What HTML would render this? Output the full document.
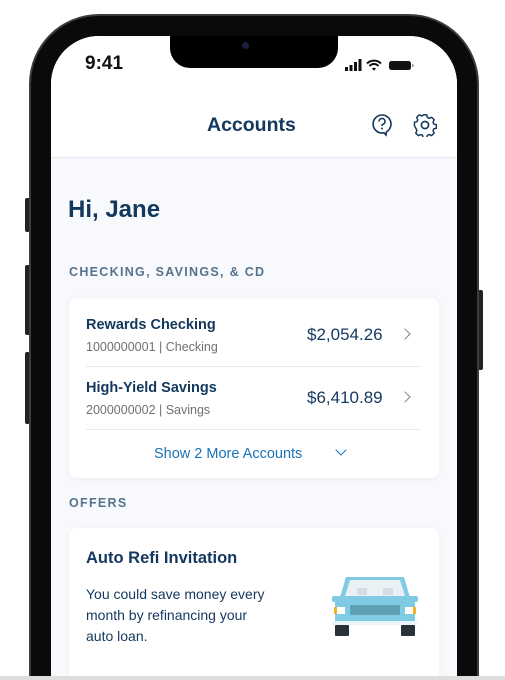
<!DOCTYPE html>
<html style="width:505px;height:680px;overflow:hidden"><head><style>
*{margin:0;padding:0;box-sizing:border-box}
body{width:505px;height:680px;background:#fff;position:relative;overflow:hidden;font-family:"Liberation Sans",sans-serif}
.frame{position:absolute;left:29px;top:14px;width:450px;height:666px;background:#0a0a0a;border-radius:70px 70px 0 0;border:2px solid #3a3d40;border-bottom:0}
.screen{position:absolute;left:51px;top:36px;width:406px;height:644px;background:#f7f9fc;border-radius:48px 48px 0 0;overflow:hidden}
.hdr{position:absolute;left:0;top:0;width:406px;height:122px;background:#fff;border-bottom:1.5px solid #e4ecf3}
.notch{position:absolute;left:119px;top:-2px;width:168px;height:34px;background:#000;border-radius:0 0 20px 20px}
.btn{position:absolute;background:#222;border-radius:2px}
.t{position:absolute;white-space:nowrap;color:#13385d}
.card{position:absolute;background:#fff;border-radius:8px;box-shadow:0 1px 6px rgba(0,0,0,.05)}
.lbl{position:absolute;font-size:12.5px;letter-spacing:1.3px;color:#56738d;font-weight:bold}
.chev{position:absolute;width:8px;height:8px;border-right:1.8px solid #7a8796;border-top:1.8px solid #7a8796;transform:rotate(45deg)}
</style></head><body>
<div class="btn" style="left:25px;top:198px;width:5px;height:34px"></div>
<div class="btn" style="left:25px;top:265px;width:5px;height:70px"></div>
<div class="btn" style="left:25px;top:352px;width:5px;height:72px"></div>
<div class="btn" style="left:478px;top:290px;width:5px;height:80px"></div>
<div class="frame"></div>
<div class="screen">
 <div class="hdr"></div>
 <div class="notch"><div style="position:absolute;left:72px;top:8px;width:7px;height:7px;border-radius:50%;background:#1a2040"></div></div>
 <div class="t" style="left:34px;top:17px;font-size:19px;font-weight:bold;color:#111">9:41</div>
 <svg style="position:absolute;left:294px;top:23px" width="70" height="12" viewBox="0 0 70 12">
  <rect x="0" y="8" width="3" height="4" fill="#111"/><rect x="4.5" y="6" width="3" height="6" fill="#111"/><rect x="9" y="3" width="3" height="9" fill="#111"/><rect x="13.5" y="0" width="3" height="12" fill="#111"/>
  <path d="M22 4.5a10 10 0 0 1 14 0M24.5 7a6 6 0 0 1 9 0" stroke="#111" stroke-width="2" fill="none"/><path d="M27 9.5l2 2.3 2-2.3a3 3 0 0 0-4 0z" fill="#111"/>
  <rect x="44" y="2" width="22" height="9" rx="2.5" fill="#111"/><rect x="67" y="5" width="1.5" height="3" fill="#999"/>
 </svg>
 <div class="t" style="left:156px;top:78px;font-size:19.5px;font-weight:bold">Accounts</div>
 <svg style="position:absolute;left:320px;top:77px" width="22" height="24" viewBox="0 0 22 24"><path d="M11 2a9 9 0 1 0 2 17.8L15 22l.5-3.2A9 9 0 0 0 11 2z" fill="none" stroke="#13385d" stroke-width="1.6"/><path d="M8 8.5a3 3 0 1 1 4 2.8c-.8.4-1 .9-1 1.7" fill="none" stroke="#13385d" stroke-width="1.6"/><circle cx="11" cy="15.5" r="1" fill="#13385d"/></svg>
 <svg style="position:absolute;left:362px;top:77px" width="24" height="24" viewBox="0 0 24 24"><path d="M10 2h4l.6 2.8 2 1 2.6-1.2 2.8 2.8-1.2 2.6.8 2 2.8.6v4l-2.8.6-.8 2 1.2 2.6-2.8 2.8-2.6-1.2-2 .8-.6 2.8h-4l-.6-2.8-2-.8-2.6 1.2-2.8-2.8 1.2-2.6-.8-2L.6 14V10l2.8-.6.8-2L3 4.8 5.8 2l2.6 1.2 2-1z" transform="scale(.92) translate(1 0)" fill="none" stroke="#13385d" stroke-width="1.6" stroke-linejoin="round"/><circle cx="12" cy="12" r="3.6" fill="none" stroke="#13385d" stroke-width="1.6"/></svg>
 <div class="t" style="left:17px;top:160px;font-size:24px;font-weight:bold">Hi, Jane</div>
 <div class="lbl" style="left:18px;top:229px">CHECKING, SAVINGS, &amp; CD</div>
 <div class="card" style="left:18px;top:262px;width:370px;height:180px"></div>
 <div class="t" style="left:35px;top:281px;font-size:14.5px;font-weight:bold">Rewards Checking</div>
 <div class="t" style="left:35px;top:304px;font-size:12.5px;color:#707070">1000000001 | Checking</div>
 <div class="t" style="left:256px;top:289px;font-size:17px">$2,054.26</div>
 <div class="chev" style="left:350px;top:294px"></div>
 <div style="position:absolute;left:35px;top:330px;width:335px;height:1px;background:#e6eaee"></div>
 <div class="t" style="left:35px;top:344px;font-size:14.5px;font-weight:bold">High-Yield Savings</div>
 <div class="t" style="left:35px;top:367px;font-size:12.5px;color:#707070">2000000002 | Savings</div>
 <div class="t" style="left:256px;top:352px;font-size:17px">$6,410.89</div>
 <div class="chev" style="left:350px;top:357px"></div>
 <div style="position:absolute;left:35px;top:393px;width:335px;height:1px;background:#e6eaee"></div>
 <div class="t" style="left:103px;top:410px;font-size:14.5px;color:#1a73b8">Show 2 More Accounts</div>
 <div class="chev" style="left:286px;top:410px;transform:rotate(135deg);border-color:#1a73b8"></div>
 <div class="lbl" style="left:18px;top:460px">OFFERS</div>
 <div class="card" style="left:18px;top:492px;width:370px;height:152px;border-radius:8px 8px 0 0"></div>
 <div class="t" style="left:35px;top:513px;font-size:16.5px;font-weight:bold">Auto Refi Invitation</div>
 <div class="t" style="left:35px;top:548px;font-size:14px;line-height:21px;color:#13385d">You could save money every<br>month by refinancing your<br>auto loan.</div>
 <svg style="position:absolute;left:280px;top:538px" width="88" height="68" viewBox="0 0 88 68">
  <path d="M15 3h58l7 24H8z" fill="#7fcbe4"/><path d="M19 6h50l5 16H14z" fill="#e9f1f4"/>
  <rect x="26" y="14" width="10" height="7" fill="#d3dde2"/><rect x="52" y="14" width="10" height="7" fill="#d3dde2"/>
  <rect x="1" y="22" width="10" height="6" rx="2" fill="#7fcbe4"/><rect x="77" y="22" width="10" height="6" rx="2" fill="#7fcbe4"/>
  <rect x="4" y="26" width="80" height="23" rx="3" fill="#7fcbe4"/>
  <rect x="19" y="31" width="50" height="10" rx="1.5" fill="#5f9fb3"/>
  <rect x="3" y="33" width="3" height="7" fill="#f0b323"/><rect x="6" y="33" width="8" height="7" fill="#fff"/>
  <rect x="82" y="33" width="3" height="7" fill="#f0b323"/><rect x="74" y="33" width="8" height="7" fill="#fff"/>
  <rect x="2" y="47" width="84" height="4" rx="1" fill="#e9f5fa"/>
  <rect x="4" y="51" width="14" height="11" rx="1" fill="#2a3238"/><rect x="70" y="51" width="14" height="11" rx="1" fill="#2a3238"/>
 </svg>
</div>
<div style="position:absolute;left:0;top:676px;width:505px;height:4px;background:#ddd"></div>
</body></html>
